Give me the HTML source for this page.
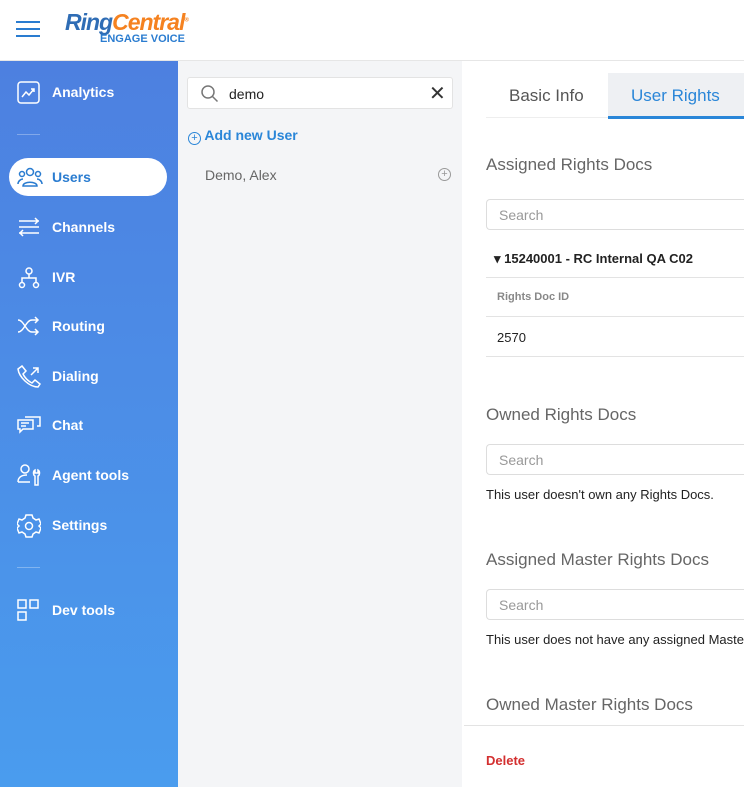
<!DOCTYPE html>
<html><head><meta charset="utf-8"><style>
*{box-sizing:border-box;margin:0;padding:0}
html,body{width:744px;height:787px;overflow:hidden}
body{font-family:"Liberation Sans",Arial,sans-serif;background:#fff;position:relative}
.abs{position:absolute}
#hdr{left:0;top:0;width:744px;height:61px;background:#fff;border-bottom:1px solid #e6e6e6}
#side{left:0;top:61px;width:178px;height:726px;background:linear-gradient(180deg,#4d80e0,#4a9cee)}
.nav{position:absolute;left:0;width:178px;height:38px;color:#fff;font-size:14px;font-weight:bold}
.nav svg{position:absolute;left:17px;top:8px}
.nav span{position:absolute;left:52px;top:11px}
.sep{position:absolute;left:17px;width:23px;height:1px;background:rgba(255,255,255,.3)}
#mid{left:178px;top:61px;width:284px;height:726px;background:#f4f5f7}
#right{left:462px;top:61px;width:282px;height:726px;background:#fff}
.h{position:absolute;left:486px;font-size:17px;color:#666}
.sb{position:absolute;left:486px;width:258px;height:31px;border:1px solid #ddd;border-right:none;border-radius:4px 0 0 4px;color:#999;font-size:14px;padding:7px 12px}
.ln{position:absolute;left:486px;width:258px;height:1px;background:#e3e3e3}
.t{position:absolute;font-size:13px;color:#222}
</style></head><body>
<div id="hdr" class="abs">
<div class="abs" style="left:16px;top:21px;width:24px;height:2px;background:#2a7cd0"></div>
<div class="abs" style="left:16px;top:28px;width:24px;height:2px;background:#2a7cd0"></div>
<div class="abs" style="left:16px;top:35px;width:24px;height:2px;background:#2a7cd0"></div>
<div class="abs" style="left:65px;top:9px;font-size:23px;font-weight:bold;font-style:italic;letter-spacing:-1px;white-space:nowrap"><span style="color:#2f6db5">Ring</span><span style="color:#f58220">Central</span><sup style="font-size:6px;color:#f58220">®</sup></div>
<div class="abs" style="left:100px;top:33px;font-size:11px;font-weight:bold;color:#2a7cd0">ENGAGE VOICE</div>
</div>
<div id="side" class="abs">
<div class="nav" style="top:12px"><svg width="24" height="24" fill="none" stroke="#fff" stroke-width="1.5"><rect x="1" y="1" width="21" height="21" rx="3"/><path d="M5 16l4-5 3 3 5-6M14 8h3v3"/></svg><span>Analytics</span></div>
<div class="sep" style="top:73px"></div>
<div style="position:absolute;left:9px;top:97px;width:158px;height:38px;background:#fff;border-radius:19px"></div>
<div class="nav" style="top:97px;color:#2a7cd0"><svg width="26" height="22" fill="none" stroke="#2a7cd0" stroke-width="1.5"><circle cx="13" cy="6" r="3.5"/><circle cx="5" cy="8" r="2.5"/><circle cx="21" cy="8" r="2.5"/><path d="M6 20c0-5 14-5 14 0zM1 18c0-3 3-5 5-5M25 18c0-3-3-5-5-5"/></svg><span>Users</span></div>
<div class="nav" style="top:147px"><svg width="24" height="22" fill="none" stroke="#fff" stroke-width="1.5"><path d="M2 5h20M2 11h20M2 17h20M18 2l3 3-3 3M6 14l-3 3 3 3"/></svg><span>Channels</span></div>
<div class="nav" style="top:197px"><svg width="24" height="24" fill="none" stroke="#fff" stroke-width="1.5"><circle cx="12" cy="5" r="3"/><circle cx="5" cy="19" r="2.5"/><circle cx="19" cy="19" r="2.5"/><path d="M12 8v4M5 16v-4h14v4"/></svg><span>IVR</span></div>
<div class="nav" style="top:246px"><svg width="24" height="22" fill="none" stroke="#fff" stroke-width="1.5"><path d="M1 5c6 0 8 12 14 12h6M1 17c6 0 8-12 14-12h6M18 2l3 3-3 3M18 14l3 3-3 3"/></svg><span>Routing</span></div>
<div class="nav" style="top:296px"><svg width="24" height="24" fill="none" stroke="#fff" stroke-width="1.5"><path d="M5 1l4 5-3 3c2 4 5 7 9 9l3-3 5 4-2 3C12 22 2 12 1 4zM14 10l7-7M16 3h5v5"/></svg><span>Dialing</span></div>
<div class="nav" style="top:345px"><svg width="24" height="22" fill="none" stroke="#fff" stroke-width="1.5"><path d="M1 6h15v9H6l-3 3v-3H1zM8 3h15v9h-3M4 9h8M4 12h5"/></svg><span>Chat</span></div>
<div class="nav" style="top:395px"><svg width="26" height="24" fill="none" stroke="#fff" stroke-width="1.5"><circle cx="8" cy="5" r="4"/><path d="M1 18c0-5 4-7 9-7M1 18h12M18 6c-2 1-2 5 0 6v9h3v-9c2-1 2-5 0-6v3h-3z"/></svg><span>Agent tools</span></div>
<div class="nav" style="top:445px"><svg width="24" height="24" fill="none" stroke="#fff" stroke-width="1.5"><path d="M9 1h6l1 3 3 2 3-1 2 5-2 2 2 2-2 5-3-1-3 2-1 3H9l-1-3-3-2-3 1-2-5 2-2-2-2 2-5 3 1 3-2z"/><circle cx="12" cy="12" r="3.5"/></svg><span>Settings</span></div>
<div class="sep" style="top:506px"></div>
<div class="nav" style="top:530px"><svg width="24" height="24" fill="none" stroke="#fff" stroke-width="1.5"><rect x="1" y="1" width="8" height="8"/><rect x="13" y="1" width="8" height="8"/><rect x="1" y="13" width="8" height="8"/></svg><span>Dev tools</span></div>
</div>
<div id="mid" class="abs">
<div class="abs" style="left:9px;top:16px;width:266px;height:32px;background:#fff;border:1px solid #e3e3e3;border-radius:3px">
<svg class="abs" style="left:12px;top:6px" width="20" height="20" fill="none" stroke="#777" stroke-width="1.5"><circle cx="8" cy="8" r="6"/><path d="M12.5 12.5l5 5"/></svg>
<div class="abs" style="left:41px;top:8px;font-size:14px;color:#222">demo</div>
<div class="abs" style="left:241px;top:3px;font-size:20px;color:#333">✕</div>
</div>
<div class="abs" style="left:10px;top:66px;font-size:14px;font-weight:bold;color:#2a86d8;white-space:nowrap"><span style="display:inline-block;width:13px;height:13px;border:1.5px solid #2a86d8;border-radius:50%;font-size:11px;line-height:10px;text-align:center;vertical-align:-1px;font-weight:normal">+</span> Add new User</div>
<div class="abs" style="left:27px;top:106px;font-size:14px;color:#666">Demo, Alex</div>
<div class="abs" style="left:260px;top:107px;width:13px;height:13px;border:1px solid #999;border-radius:50%;font-size:11px;line-height:11px;text-align:center;color:#999">+</div>
</div>
<div id="right" class="abs"></div>
<div class="abs" style="left:486px;top:117px;width:258px;height:1px;background:#eee"></div>
<div class="abs" style="left:608px;top:73px;width:136px;height:46px;background:#eef0f3;border-bottom:3px solid #2a86d8"></div>
<div class="abs" style="left:509px;top:86px;font-size:17px;color:#555">Basic Info</div>
<div class="abs" style="left:631px;top:86px;font-size:17px;color:#2a86d8">User Rights</div>
<div class="h" style="top:155px">Assigned Rights Docs</div>
<div class="sb" style="top:199px">Search</div>
<div class="t" style="left:494px;top:251px;font-weight:bold">▾ 15240001 - RC Internal QA C02</div>
<div class="ln" style="top:277px"></div>
<div class="t" style="left:497px;top:291px;font-size:11px;color:#888;font-weight:bold">Rights Doc ID</div>
<div class="ln" style="top:316px"></div>
<div class="t" style="left:497px;top:330px">2570</div>
<div class="ln" style="top:356px"></div>
<div class="h" style="top:405px">Owned Rights Docs</div>
<div class="sb" style="top:444px">Search</div>
<div class="t" style="left:486px;top:487px">This user doesn't own any Rights Docs.</div>
<div class="h" style="top:550px">Assigned Master Rights Docs</div>
<div class="sb" style="top:589px">Search</div>
<div class="t" style="left:486px;top:632px;width:258px;overflow:hidden;white-space:nowrap">This user does not have any assigned Master Rights Docs.</div>
<div class="h" style="top:695px">Owned Master Rights Docs</div>
<div class="abs" style="left:464px;top:725px;width:280px;height:1px;background:#e3e3e3"></div>
<div class="t" style="left:486px;top:753px;color:#d32f2f;font-weight:bold">Delete</div>
</body></html>
